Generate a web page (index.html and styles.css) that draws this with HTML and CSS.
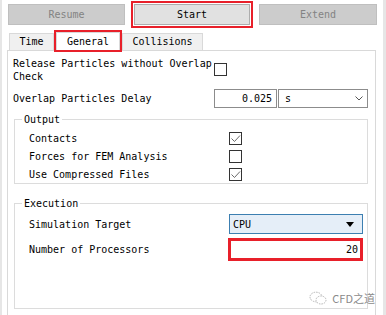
FILE: index.html
```html
<!DOCTYPE html>
<html lang="en">
<head>
    <meta charset="UTF-8">
    <title>Simulation</title>
    <link rel="stylesheet" href="styles.css">
</head>
<body>

<div class="window">
    <div class="toolbar">
        <button class="btn btn-disabled btn-resume">Resume</button>
        <button class="btn btn-start">Start</button>
        <button class="btn btn-disabled btn-extend">Extend</button>
    </div>

    <div class="tabs">
        <div class="tab tab-time">Time</div>
        <div class="tab tab-active">General</div>
        <div class="tab tab-collisions">Collisions</div>
    </div>

    <div class="pane">
        <div class="row row-release">
            <span class="label-wrap">Release Particles without Overlap Check</span>
            <span class="checkbox"></span>
        </div>

        <div class="row row-delay">
            <span class="label-grow">Overlap Particles Delay</span>
            <span class="field field-num">0.025</span>
            <span class="field field-select">
                s
                <svg class="chevron" width="8" height="5" viewBox="0 0 8 5">
                    <polyline points="0.5,0.5 4,4 7.5,0.5" fill="none" stroke="#555" stroke-width="1"/>
                </svg>
            </span>
        </div>

        <fieldset class="group group-output">
            <legend>Output</legend>
            <div class="opt-row">
                <span class="opt-label">Contacts</span>
                <span class="checkbox">
                    <svg width="11" height="11" viewBox="0 0 11 11"><polyline points="1.5,5.5 4.5,8.5 10,2.5" fill="none" stroke="#6b6b6b" stroke-width="1"/></svg>
                </span>
            </div>
            <div class="opt-row">
                <span class="opt-label">Forces for FEM Analysis</span>
                <span class="checkbox"></span>
            </div>
            <div class="opt-row">
                <span class="opt-label">Use Compressed Files</span>
                <span class="checkbox">
                    <svg width="11" height="11" viewBox="0 0 11 11"><polyline points="1.5,5.5 4.5,8.5 10,2.5" fill="none" stroke="#6b6b6b" stroke-width="1"/></svg>
                </span>
            </div>
        </fieldset>

        <fieldset class="group group-exec">
            <legend>Execution</legend>
            <div class="exec-row exec-target">
                <span class="opt-label">Simulation Target</span>
                <span class="combo">
                    CPU
                    <svg class="combo-arrow" width="8" height="5" viewBox="0 0 8 5"><polygon points="0,0 8,0 4,5" fill="#000"/></svg>
                </span>
            </div>
            <div class="exec-row exec-procs">
                <span class="opt-label">Number of Processors</span>
                <span class="procs">20</span>
            </div>
        </fieldset>
    </div>

    <div class="watermark">
        <svg width="18" height="14" viewBox="0 0 18 14">
            <ellipse cx="7" cy="6" rx="6" ry="4.8" fill="none" stroke="#b5b5b5" stroke-width="1" stroke-dasharray="1.5 1"/>
            <ellipse cx="12" cy="9" rx="5" ry="4" fill="#fff" stroke="#b5b5b5" stroke-width="1" stroke-dasharray="1.5 1"/>
        </svg>
        <span>CFD之道</span>
    </div>
</div>

</body>
</html>
```

FILE: styles.css
```css
body {
    margin: 0;
    background-color: #fff;
    font-family: "DejaVu Sans Mono", "Liberation Mono", "Noto Sans CJK SC", monospace;
    font-size: 10px;
    color: #000;
}

.window {
    position: relative;
    box-sizing: border-box;
    width: 386px;
    height: 315px;
    overflow: hidden;
    background-color: #fff;
    border-left: 2px solid #e6e6e6;
    border-right: 3px solid #e6e6e6;
}

/* top buttons */
.toolbar {
    display: flex;
    padding: 4px 0 0 6px;
}

.btn {
    box-sizing: border-box;
    height: 21px;
    padding: 0;
    font-family: inherit;
    font-size: 10px;
    border: 1px solid #bfbfbf;
    border-radius: 0;
}

.btn-disabled {
    background-color: #cccccc;
    color: #838383;
}

.btn-resume {
    width: 117px;
}

.btn-start {
    width: 116px;
    margin-left: 9px;
    background-color: #e1e1e1;
    border-color: #adadad;
    color: #000;
    outline: 2px solid #e8202a;
    outline-offset: 1px;
}

.btn-extend {
    width: 118px;
    margin-left: 9px;
}

/* tabs */
.tabs {
    display: flex;
    align-items: flex-end;
    height: 19px;
    margin-top: 6px;
    padding-left: 7px;
}

.tab {
    box-sizing: border-box;
    height: 17px;
    line-height: 16px;
    text-align: center;
    background-color: #f0f0f0;
    border: 1px solid #d9d9d9;
    border-bottom: none;
}

.tab-time {
    width: 45px;
}

.tab-active {
    position: relative;
    z-index: 1;
    width: 64px;
    height: 18px;
    line-height: 18px;
    margin-left: 2px;
    background-color: #fff;
    outline: 2px solid #e8202a;
}

.tab-collisions {
    width: 81px;
    margin-left: 2px;
}

/* tab page */
.pane {
    box-sizing: border-box;
    width: 369px;
    height: 300px;
    margin-left: 5px;
    padding: 6px 7px 0 5px;
    border: 1px solid #d9d9d9;
    background-color: #fff;
}

.row {
    display: flex;
}

.label-wrap {
    width: 201px;
    line-height: 13px;
}

.checkbox {
    box-sizing: border-box;
    display: flex;
    align-items: center;
    justify-content: center;
    width: 13px;
    height: 13px;
    border: 1px solid #333;
    background-color: #fff;
}

.row-release .checkbox {
    margin-top: 6px;
}

.row-delay {
    align-items: center;
    margin-top: 6px;
}

.label-grow {
    flex: 1;
}

.field {
    box-sizing: border-box;
    height: 19px;
    line-height: 17px;
    border: 1px solid #8c8c8c;
}

.field-num {
    width: 63px;
    padding-right: 4px;
    text-align: right;
}

.field-select {
    display: flex;
    align-items: center;
    justify-content: space-between;
    width: 90px;
    margin-left: 1px;
    padding: 0 4px 0 6px;
}

/* group boxes */
.group {
    margin: 5px 0 0 1px;
    padding: 0;
    border: 1px solid #dcdcdc;
}

.group legend {
    margin-left: 7px;
    padding: 0 2px;
    line-height: 13px;
}

.group-output {
    padding-top: 3px;
}

.opt-row {
    display: flex;
    align-items: center;
    height: 18px;
    padding-left: 14px;
}

.opt-label {
    width: 200px;
}

.group-exec {
    margin-top: 13px;
    padding-top: 4px;
    padding-bottom: 47px;
}

.exec-row {
    display: flex;
    align-items: center;
    padding-left: 14px;
}

.exec-target {
    height: 20px;
}

.exec-procs {
    height: 23px;
    margin-top: 4px;
}

.combo {
    box-sizing: border-box;
    display: flex;
    align-items: center;
    justify-content: space-between;
    width: 134px;
    height: 20px;
    padding: 0 8px 0 3px;
    border: 1px solid #3c7fb1;
    background-color: #e5eef8;
}

.procs {
    box-sizing: border-box;
    width: 135px;
    height: 23px;
    line-height: 17px;
    margin-left: -1px;
    padding-right: 2px;
    text-align: right;
    border: 3px solid #e8202a;
    background-color: #fff;
}

/* watermark in the corner */
.watermark {
    position: absolute;
    right: 8px;
    top: 290px;
    display: flex;
    align-items: center;
    gap: 5px;
    font-family: "Noto Sans CJK SC", sans-serif;
    font-size: 11px;
    color: #8a8a8a;
}
```
